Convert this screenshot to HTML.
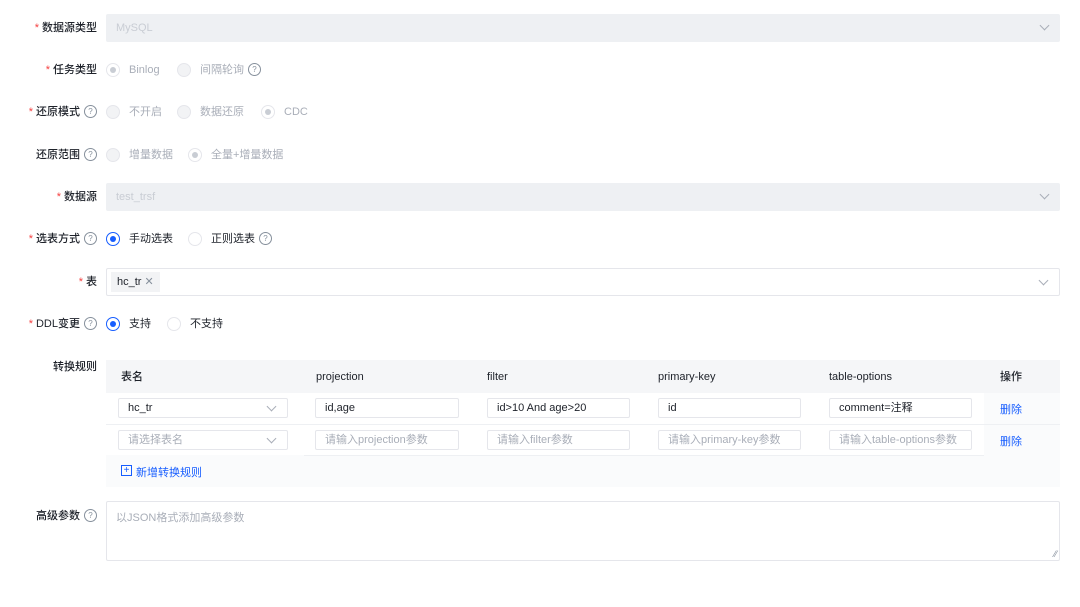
<!DOCTYPE html><html><head><meta charset="utf-8"><style>
body{margin:0;width:1080px;height:607px;background:#fff;font-family:"Liberation Sans","Noto Sans CJK SC",sans-serif;font-size:11px;color:#1d2129;position:relative;overflow:hidden}
.a{position:absolute}
.lab{position:absolute;right:983px;white-space:nowrap;color:#1d2129;font-weight:500;line-height:14px;height:14px}
.st{color:#f53f3f;margin-right:3px}
.q{display:inline-block;width:11px;height:11px;border:1px solid #86909c;border-radius:50%;font-size:8px;line-height:11px;text-align:center;color:#86909c;vertical-align:top;margin-left:4px;font-weight:normal}
.sel{position:absolute;left:106px;width:954px;height:28px;background:#eef0f3;border-radius:2px;color:#c9cdd4;line-height:28px;box-sizing:border-box;padding-left:10px}
.chev{position:absolute;right:12px;top:8px;width:6px;height:6px;border-right:1px solid #a9aeb8;border-bottom:1px solid #a9aeb8;transform:rotate(45deg)}
.r{position:absolute;width:14px;height:14px;border-radius:50%;box-sizing:border-box;border:1px solid #e5e6eb;background:#f2f3f5}
.r.d::after{content:"";position:absolute;left:3px;top:3px;width:6px;height:6px;border-radius:50%;background:#c9cdd4}
.r.d{background:#fff}
.r.on{border:1px solid #165dff;background:#fff}
.r.on::after{content:"";position:absolute;left:3px;top:3px;width:6px;height:6px;border-radius:50%;background:#165dff}
.r.w{background:#fff}
.t{position:absolute;line-height:14px;white-space:nowrap;height:14px}
.g{color:#a9aeb8}
.in{position:absolute;height:20px;border:1px solid #e5e6eb;border-radius:2px;box-sizing:border-box;line-height:18px;padding-left:9px;background:#fff;white-space:nowrap}
.in .chev{top:4px}
.ph{color:#a9aeb8}
.lnk{color:#165dff;position:absolute}
</style></head><body>
<div class="lab" style="top:21px"><span class="st">*</span>数据源类型</div>
<div class="sel" style="top:14px">MySQL<span class="chev"></span></div>

<div class="lab" style="top:63px"><span class="st">*</span>任务类型</div>
<div class="r d" style="left:106px;top:63px"></div><div class="t g" style="left:129px;top:63px">Binlog</div>
<div class="r" style="left:177px;top:63px"></div><div class="t g" style="left:200px;top:63px">间隔轮询<span class="q">?</span></div>

<div class="lab" style="top:105px"><span class="st">*</span>还原模式<span class="q">?</span></div>
<div class="r" style="left:106px;top:105px"></div><div class="t g" style="left:129px;top:105px">不开启</div>
<div class="r" style="left:177px;top:105px"></div><div class="t g" style="left:200px;top:105px">数据还原</div>
<div class="r d" style="left:261px;top:105px"></div><div class="t g" style="left:284px;top:105px">CDC</div>

<div class="lab" style="top:148px">还原范围<span class="q">?</span></div>
<div class="r" style="left:106px;top:148px"></div><div class="t g" style="left:129px;top:148px">增量数据</div>
<div class="r d" style="left:188px;top:148px"></div><div class="t g" style="left:211px;top:148px">全量+增量数据</div>

<div class="lab" style="top:190px"><span class="st">*</span>数据源</div>
<div class="sel" style="top:183px">test_trsf<span class="chev"></span></div>

<div class="lab" style="top:232px"><span class="st">*</span>选表方式<span class="q">?</span></div>
<div class="r on" style="left:106px;top:232px"></div><div class="t" style="left:129px;top:232px">手动选表</div>
<div class="r w" style="left:188px;top:232px"></div><div class="t" style="left:211px;top:232px">正则选表<span class="q">?</span></div>

<div class="lab" style="top:275px"><span class="st">*</span>表</div>
<div class="a" style="left:106px;top:268px;width:954px;height:28px;border:1px solid #e5e6eb;border-radius:2px;box-sizing:border-box">
<div class="a" style="left:4px;top:3px;height:20px;padding:0 6px;background:#f2f3f5;line-height:20px">hc_tr <span style="color:#86909c">✕</span></div><span class="chev"></span></div>

<div class="lab" style="top:317px"><span class="st">*</span>DDL变更<span class="q">?</span></div>
<div class="r on" style="left:106px;top:317px"></div><div class="t" style="left:129px;top:317px">支持</div>
<div class="r w" style="left:167px;top:317px"></div><div class="t" style="left:190px;top:317px">不支持</div>

<div class="lab" style="top:360px">转换规则</div>
<div class="a" style="left:106px;top:360px;width:954px;height:127px;background:#fafbfc"></div>
<div class="a" style="left:106px;top:360px;width:954px;height:33px;background:#f5f6f8"></div>
<div class="a" style="left:106px;top:393px;width:878px;height:62px;background:#fff"></div>
<div class="a" style="left:106px;top:424px;width:954px;height:1px;background:#eef0f3"></div>
<div class="a" style="left:304px;top:455px;width:680px;height:1px;background:#eef0f3"></div>
<div class="t" style="left:121px;top:370px;font-weight:500">表名</div>
<div class="t" style="left:316px;top:370px;font-weight:500">projection</div>
<div class="t" style="left:487px;top:370px;font-weight:500">filter</div>
<div class="t" style="left:658px;top:370px;font-weight:500">primary-key</div>
<div class="t" style="left:829px;top:370px;font-weight:500">table-options</div>
<div class="t" style="left:1000px;top:370px;font-weight:500">操作</div>

<div class="in" style="left:118px;top:398px;width:170px">hc_tr<span class="chev"></span></div>
<div class="in" style="left:315px;top:398px;width:144px">id,age</div>
<div class="in" style="left:487px;top:398px;width:143px">id&gt;10 And age&gt;20</div>
<div class="in" style="left:658px;top:398px;width:143px">id</div>
<div class="in" style="left:829px;top:398px;width:143px">comment=注释</div>
<div class="lnk" style="left:1000px;top:401px">删除</div>

<div class="in ph" style="left:118px;top:430px;width:170px">请选择表名<span class="chev"></span></div>
<div class="in ph" style="left:315px;top:430px;width:144px">请输入projection参数</div>
<div class="in ph" style="left:487px;top:430px;width:143px">请输入filter参数</div>
<div class="in ph" style="left:658px;top:430px;width:143px">请输入primary-key参数</div>
<div class="in ph" style="left:829px;top:430px;width:143px">请输入table-options参数</div>
<div class="lnk" style="left:1000px;top:433px">删除</div>

<div class="lnk" style="left:121px;top:464px"><span style="display:inline-block;width:9px;height:9px;border:1px solid #165dff;line-height:9px;text-align:center;font-size:10px;vertical-align:top;margin-top:1px;margin-right:4px">+</span>新增转换规则</div>

<div class="lab" style="top:509px">高级参数<span class="q">?</span></div>
<div class="a" style="left:106px;top:501px;width:954px;height:60px;border:1px solid #e5e6eb;border-radius:2px;box-sizing:border-box;padding:7px 9px;color:#a9aeb8">以JSON格式添加高级参数
<span class="a" style="right:2px;bottom:1px;color:#86909c;font-size:9px">⁄⁄</span></div>
</body></html>
